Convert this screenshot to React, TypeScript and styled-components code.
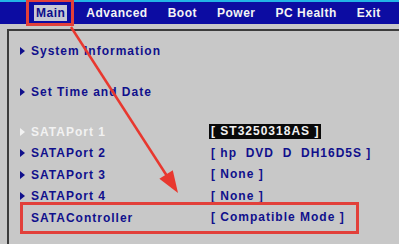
import styled, { createGlobalStyle } from "styled-components";

const Global = createGlobalStyle`
  html, body {
    margin: 0;
    padding: 0;
    background: #c8c8c8;
    width: 399px;
    height: 244px;
    overflow: hidden;
  }
`;

const Screen = styled.div`
  position: relative;
  width: 399px;
  height: 244px;
  overflow: hidden;
  background: #c8c8c8;
  font-family: "Liberation Sans", Arial, sans-serif;
  font-weight: bold;
  font-size: 12px;
`;

const MenuBar = styled.div`
  height: 22px;
  border-top: 2px solid #22b4e6;
  background: #0c0ca2;
  display: flex;
  align-items: center;
  padding-left: 30px;
  gap: 16px;
`;

const MenuItem = styled.div<{ $active?: boolean; $marked?: boolean }>`
  position: relative;
  color: ${(p) => (p.$active ? "#0c0c8a" : "#f4f4f4")};
  letter-spacing: 0.5px;
  padding: 1px 2px;
  background: ${(p) => (p.$active ? "#c8c8d4" : "transparent")};
  margin: ${(p) => (p.$active ? "0 1px 0 4px" : "0")};

  ${(p) =>
    p.$marked &&
    `
    &::after {
      content: "";
      position: absolute;
      left: -8px;
      right: -7px;
      top: -6px;
      bottom: -5px;
      border: 3px solid #e2403a;
    }
  `}
`;

const Panel = styled.div`
  box-sizing: border-box;
  margin: 5px 0 0 7px;
  border-top: 2px solid #3c3c3c;
  border-left: 2px solid #3c3c3c;
  height: 215px;
  padding-top: 9px;
`;

const Row = styled.div<{ $gap?: number; $marked?: boolean }>`
  position: relative;
  display: grid;
  grid-template-columns: 200px auto;
  align-items: center;
  height: 21.5px;
  margin-top: ${(p) => p.$gap ?? 0}px;
  letter-spacing: 1px;

  ${(p) =>
    p.$marked &&
    `
    &::after {
      content: "";
      position: absolute;
      left: 11px;
      width: 333px;
      top: -5px;
      bottom: -5px;
      border: 3px solid #e2403a;
    }
  `}
`;

const Label = styled.div<{ $selected?: boolean }>`
  display: flex;
  align-items: center;
  color: ${(p) => (p.$selected ? "#f2f2f2" : "#10108c")};
  padding-left: 11px;
`;

const Arrow = styled.span<{ $hidden?: boolean }>`
  width: 0;
  height: 0;
  border-top: 4px solid transparent;
  border-bottom: 4px solid transparent;
  border-left: 5px solid currentColor;
  margin-right: 6px;
  visibility: ${(p) => (p.$hidden ? "hidden" : "visible")};
`;

const Value = styled.div<{ $selected?: boolean }>`
  justify-self: start;
  white-space: pre;
  color: ${(p) => (p.$selected ? "#f2f2f2" : "#10108c")};
  background: ${(p) => (p.$selected ? "#0a0a0a" : "transparent")};
  padding: 0 2px;
  line-height: 15px;
`;

const Overlay = styled.svg`
  position: absolute;
  left: 0;
  top: 0;
  pointer-events: none;
`;

const menu = ["Main", "Advanced", "Boot", "Power", "PC Health", "Exit"];

const rows = [
  { label: "System Information", gap: 0, sub: true },
  { label: "Set Time and Date", gap: 20, sub: true },
  { label: "SATAPort 1", value: "[ ST3250318AS ]", gap: 18, sub: true, selected: true },
  { label: "SATAPort 2", value: "[ hp  DVD  D  DH16D5S ]", sub: true },
  { label: "SATAPort 3", value: "[ None ]", sub: true },
  { label: "SATAPort 4", value: "[ None ]", sub: true },
  { label: "SATAController", value: "[ Compatible Mode ]", marked: true },
];

function App() {
  return (
    <Screen>
      <Global />
      <MenuBar>
        {menu.map((m, i) => (
          <MenuItem key={m} $active={i === 0} $marked={i === 0}>
            {m}
          </MenuItem>
        ))}
      </MenuBar>
      <Panel>
        {rows.map((r) => (
          <Row key={r.label} $gap={r.gap} $marked={r.marked}>
            <Label $selected={r.selected}>
              <Arrow $hidden={!r.sub} />
              {r.label}
            </Label>
            {r.value && <Value $selected={r.selected}>{r.value}</Value>}
          </Row>
        ))}
      </Panel>
      <Overlay width="399" height="244" viewBox="0 0 399 244">
        <line x1="71" y1="27" x2="167" y2="176" stroke="#e8382f" strokeWidth="2.5" />
        <polygon points="178,193 159.4,178.8 172.8,170.2" fill="#e8382f" />
      </Overlay>
    </Screen>
  );
}

export default App;
